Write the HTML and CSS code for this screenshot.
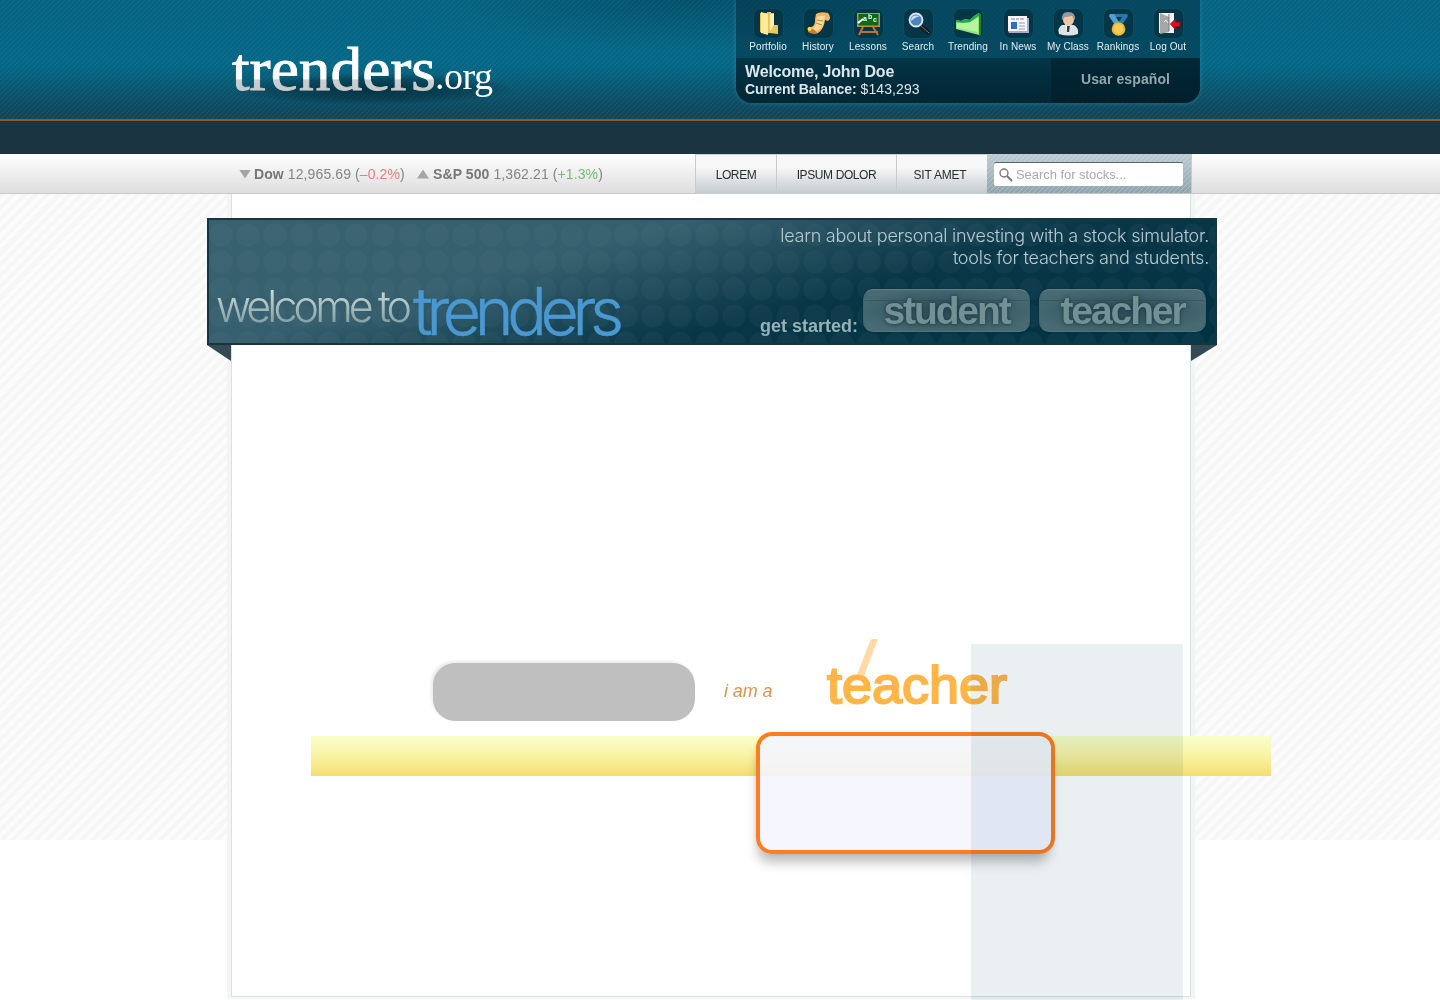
FILE: index.html
```html
<!DOCTYPE html>
<html lang="en">
<head>
<meta charset="utf-8">
<title>trenders.org</title>
<link rel="stylesheet" href="styles.css">
</head>
<body>
<header class="masthead">
  <div class="masthead-inner">
    <svg class="logo" width="290" height="80" viewBox="0 0 290 80" role="img" aria-label="trenders.org">
      <defs>
        <linearGradient id="logoFill" gradientUnits="userSpaceOnUse" x1="0" y1="15" x2="0" y2="60"><stop offset="0" stop-color="#fff"/><stop offset=".72" stop-color="#fff"/><stop offset=".76" stop-color="#ccd0d1"/><stop offset="1" stop-color="#c6c8ca"/></linearGradient>
        <radialGradient id="logoShade"><stop offset="0" stop-color="#02222d" stop-opacity=".7"/><stop offset=".6" stop-color="#02222d" stop-opacity=".4"/><stop offset="1" stop-color="#02222d" stop-opacity="0"/></radialGradient>
      </defs>
      <ellipse cx="148" cy="58" rx="142" ry="16" fill="url(#logoShade)"/>
      <text class="logo-main" x="7" y="59" textLength="204" lengthAdjust="spacingAndGlyphs" fill="url(#logoFill)" stroke="url(#logoFill)">trenders</text>
      <text class="logo-tld" x="210" y="58" textLength="58">.org</text>
    </svg>
    <section class="account">
      <nav class="tools">
        <a class="tool"><span class="tile"><svg viewBox="0 0 29 29"><path d="M6 4h7v-1h4v20l-4 2-7-2z" fill="#e4c365"/><path d="M7 3l7 2v21l-7-2z" fill="#ffe99b"/><path d="M15 4h5v12h4v9l-9-1z" fill="#e9c761"/><path d="M16 5h4v11l-4 6z" fill="#fff0ae"/></svg></span><span>Portfolio</span></a>
        <a class="tool"><span class="tile"><svg viewBox="0 0 29 29"><path d="M12 5q4-3 12-1 4 5 0 8l-3-1q-1 9-7 13-5 2-10-2l1-4q5 1 6-5 0-5 1-8z" fill="#edb765"/><path d="M13 8q3-2 8-1-1 12-8 15l-5-2q5-3 5-12z" fill="#ffd993"/><path d="M4 20q5-2 9 4-5 2-9-1z" fill="#c57b2f"/><path d="M13 11l6 1m-7 2l6 2" stroke="#bb8746"/><circle cx="5.500" cy="20" r="2" fill="#ffe13d"/></svg></span><span>History</span></a>
        <a class="tool"><span class="tile"><svg viewBox="0 0 29 29"><path d="M9 18L5 26m14-8l5 8M6 23h18" stroke="#bc7335" stroke-width="2"/><path d="M3 4h23v14H3z" fill="#c98947"/><path d="M4.500 5h20v11.500h-20z" fill="#086b16"/><path d="M4 14l5-4" stroke="#fff" stroke-width="2"/><text x="9" y="12" class="chalk">a</text><text x="14" y="10" class="chalk">b</text><text x="19" y="13" class="chalk">c</text></svg></span><span>Lessons</span></a>
        <a class="tool"><span class="tile"><svg viewBox="0 0 29 29"><path d="M17 17l8 7" stroke="#151719" stroke-width="4"/><path d="M16 16l9 8" stroke="#8c7770"/><circle cx="12" cy="11" r="6.500" fill="#4f84bd" stroke="#dce7ee" stroke-width="1.800"/><path d="M7 12q0-7 9-5-5 1-9 5z" fill="#c5e4fa"/></svg></span><span>Search</span></a>
        <a class="tool"><span class="tile"><svg viewBox="0 0 29 29"><path d="M2 11l5 1 4-2 5 1 4-4 5-3v22L2 20z" fill="#90e57e"/><path d="M2 11l5 1 4-2 5 1 4-4 5-3v3L16 13l-7 1-7-1z" fill="#20aa50"/><path d="M25 4l2 1v21l-2 1z" fill="#10892b"/><path d="M3 14l12 0 9-5v14L3 19z" fill="#b7f4a0"/></svg></span><span>Trending</span></a>
        <a class="tool"><span class="tile"><svg viewBox="0 0 29 29"><path d="M4 7h19v2h2v15H5l-1-2z" fill="#aaa9cf"/><path d="M4 7h19v15H4z" fill="#f9f9ff"/><path d="M7 10h4m1 0h3m1 0h4" stroke="#7f86a6" stroke-width="1.200"/><path d="M7 13h6v7H7z" fill="#2970d5"/><path d="M15 14h6m-6 3h6m-6 3h6" stroke="#9693b8"/></svg></span><span>In News</span></a>
        <a class="tool"><span class="tile"><svg viewBox="0 0 29 29"><path d="M5 25q-2-6 3-9h12q5 3 4 9-9 3-19 0z" fill="#dfe3e7"/><path d="M11 15h6l-3 10z" fill="#fff"/><path d="M13 17h3l-1 6h-2z" fill="#333e49"/><ellipse cx="14.500" cy="10.500" rx="5.500" ry="6.500" fill="#f1c6a4"/><path d="M8 11Q7 3 14 3q8 0 7 8l-3-4-7 1z" fill="#8f9a9d"/></svg></span><span>My Class</span></a>
        <a class="tool"><span class="tile"><svg viewBox="0 0 29 29"><path d="M6 5h17l1 2-6 9h-7L5 7z" fill="#2579ad"/><path d="M11 8h7l-3.500 5z" fill="#06364b"/><path d="M6 5h4l7 11h-6L5 7z" fill="#5a9fca"/><circle cx="14.500" cy="20" r="6.800" fill="#eab936"/><circle cx="14.500" cy="20" r="4.800" fill="#f8cb59"/></svg></span><span>Rankings</span></a>
        <a class="tool"><span class="tile"><svg viewBox="0 0 29 29"><path d="M5 4h15v20H5z" fill="#f3f2f0"/><path d="M6 4l9 4v15l-9 2z" fill="#a7a7a8"/><path d="M15 5v17" stroke="#777"/><path d="M10 13l2-2 2 3" stroke="#eee" fill="none"/><path d="M16.500 15l5-5v3h4.500v4.500h-4.500v3z" fill="#db111b" stroke="#9d0712"/></svg></span><span>Log Out</span></a>
      </nav>
      <div class="account-foot">
        <div class="welcome"><strong class="hello">Welcome, John Doe</strong><span class="balance"><b>Current Balance:</b> $143,293</span></div>
        <a class="language">Usar español</a>
      </div>
    </section>
  </div>
</header>
<div class="navband"></div>
<div class="ticker">
  <div class="ticker-inner">
    <div class="quotes"><i class="down"></i><span class="dow"><b>Dow</b> 12,965.69 (<em class="loss">–0.2%</em>)</span><i class="up"></i><span class="sp"><b>S&amp;P 500</b> 1,362.21 (<em class="gain">+1.3%</em>)</span></div>
    <nav class="links"><a>LOREM</a><a>IPSUM DOLOR</a><a class="last">SIT AMET</a></nav>
    <div class="searchbox"><div class="field"><svg width="14" height="14" viewBox="0 0 14 14"><circle cx="5" cy="5" r="4" fill="none" stroke="#777" stroke-width="1.400"/><path d="M8 8l5 5" stroke="#777" stroke-width="2"/></svg><span>Search for stocks...</span></div></div>
  </div>
</div>
<main class="page">
  <div class="sheet">
    <section class="banner">
      <svg class="banner-title" width="430" height="90" viewBox="0 0 430 90">
        <defs><linearGradient id="welcomeFill" gradientUnits="userSpaceOnUse" x1="0" y1="22" x2="0" y2="63"><stop stop-color="#d7e5e5"/><stop offset="1" stop-color="#7e9da1"/></linearGradient></defs>
        <text class="light" x="7" y="60" font-size="43" textLength="196" fill="url(#welcomeFill)">welcome to</text>
        <text class="light heavy" x="204" y="73" font-size="66" textLength="211" fill="#4a98cf">trenders</text>
      </svg>
      <div class="pitch">
        <p><span class="pitch-one">learn about personal investing with a stock simulator.</span><br><span class="pitch-two">tools for teachers and students.</span></p>
        <div class="start"><strong>get started:</strong><a class="role"><span>student</span></a><a class="role"><span>teacher</span></a></div>
      </div>
      <i class="fold fold-left"></i><i class="fold fold-right"></i>
    </section>
    <div class="promo">
      <div class="pill"></div>
      <em class="iam">i am a</em>
      <svg class="teacher" width="195" height="85" viewBox="0 0 195 85"><path d="M37 39L50 5q1-2 3-2h5L44 40z" fill="#ffdaa5"/><text x="7" y="67" font-size="52" textLength="180" lengthAdjust="spacingAndGlyphs">teacher</text></svg>
    </div>
    <div class="yellow"></div>
    <div class="callout"></div>
    <aside class="column"></aside>
  </div>
</main>
</body>
</html>
```
FILE: styles.css
```css
* { box-sizing: border-box; }
body { margin: 0; height: 1000px; overflow: hidden; background: #fff; font-family: "Liberation Sans", Arial, sans-serif; }
.masthead { height: 121px; border-bottom: 2px solid #8a5930; background: repeating-linear-gradient(135deg, transparent 0 2.83px, rgba(100,180,195,.12) 2.83px 3.54px), radial-gradient(ellipse 250px 50px at 690px 0, rgba(0,45,65,.35), transparent), linear-gradient(#066482, #056786 55%, #0d4a60 90%, #11465a); }
.masthead-inner { width: 1000px; margin-left: 225px; display: flex; justify-content: space-between; padding-right: 25px; }
.logo { margin-top: 31px; flex: none; }
.logo-main { font: 61px "Liberation Serif", serif; stroke-width: .9; }
.logo-tld { font: 38px "Liberation Serif", serif; fill: #fff; }
.account { width: 464px; height: 103px; overflow: hidden; border-radius: 0 0 16px 16px; background: rgba(5,55,75,.62); box-shadow: 0 0 4px 1px rgba(73,151,172,.35); }
.tools { height: 58px; padding: 9px 7px 0; display: grid; grid-template-columns: repeat(9, 50px); }
.tool { display: flex; flex-direction: column; align-items: center; font-size: 10px; line-height: 12px; color: #e1edf0; white-space: nowrap; gap: 3px; letter-spacing: .1px; }
.tile { width: 29px; height: 29px; border-radius: 7px; background: #033647; box-shadow: 0 0 2px rgba(28,103,122,.6); }
.tile svg { display: block; width: 29px; height: 29px; }
.chalk { font: bold 7px "Liberation Sans", sans-serif; fill: #fff; }
.account-foot { height: 45px; display: flex; background: linear-gradient(rgba(0,35,49,.55), rgba(0,30,42,.75)); }
.welcome { width: 315px; padding: 5px 9px; display: flex; flex-direction: column; color: #dbe7eb; }
.hello { font-size: 16px; line-height: 18px; letter-spacing: -.15px; }
.balance { font-size: 14px; line-height: 17px; letter-spacing: .1px; }
.balance b { letter-spacing: -.08px; }
.language { flex: 1; text-align: center; font-weight: bold; font-size: 14px; line-height: 43px; color: #94a8ae; background: rgba(0,20,30,.38); letter-spacing: .1px; }
.navband { height: 33px; background: #1a3541; }
.ticker { height: 40px; border-bottom: 1px solid #c8c8c8; background: linear-gradient(#fff, #dedede); }
.ticker-inner { width: 961px; margin-left: 231px; height: 39px; display: flex; }
.quotes { width: 464px; display: flex; align-items: center; padding: 1px 0 0 8px; font-size: 14px; letter-spacing: .1px; color: #858585; white-space: nowrap; }
.quotes b { color: #777; }
.dow { width: 151px; margin: 0 12px 0 3px; }
.sp { margin-left: 4px; }
.loss, .gain { font-style: normal; color: #e77d7d; }
.gain { color: #73bd72; }
.down, .up { width: 12px; height: 9px; background: #a5a5a5; clip-path: polygon(0 0, 100% 0, 50% 100%); }
.up { clip-path: polygon(50% 0, 100% 100%, 0 100%); }
.links { display: grid; grid-template-columns: 81px 120px 91px; border-top: 1px solid #ccc; }
.links a { border-left: 1px solid #c8cacb; background: linear-gradient(#f8f8f8 30%, #c1c8cc); color: #292d30; text-align: center; font-size: 12px; line-height: 40px; letter-spacing: -.4px; }
.links .last { padding-right: 4px; letter-spacing: -.2px; }
.searchbox { flex: 1; padding: 8px 8px 0 7px; border-right: 1px solid #c5cccf; background: repeating-linear-gradient(135deg, transparent 0 2.83px, rgba(255,255,255,.22) 2.83px 3.54px), linear-gradient(#bdccd1, #8fa5ad); }
.field { height: 24px; border-top: 1px solid #536672; background: #fff; border-radius: 2px; display: flex; align-items: center; gap: 3px; padding-left: 5px; font-size: 13px; letter-spacing: -.05px; color: #aaa; }
.page { height: 806px; padding-left: 227px; background: repeating-linear-gradient(135deg, #f6f6f6 0 4px, #fcfcfc 4px 8px) 0 0 / 100% 646px no-repeat; }
.sheet { position: relative; width: 968px; height: 803px; border: solid #f3f5f5; border-width: 0 4px 0; background: #fff; box-shadow: inset 1px 0 #d5e3e1, inset -1px -1px #d5e3e1, 0 2px #f7f7f7; display: flow-root; }
.banner { position: relative; width: 1010px; height: 127px; margin: 24px 0 0 -24px; border: 2px solid #183441; background: radial-gradient(circle at 12px 15px, rgba(127,148,158,.07) 11px, transparent 12px) 0 0 / 27px 27px, linear-gradient(165deg, #396270 0, #355f6e 33%, #083647 62%, #003343); display: flex; justify-content: space-between; }
.banner-title { margin-top: 42px; flex: none; overflow: visible; }
.light { font-family: Inter, sans-serif; font-weight: 300; }
.heavy { stroke: #4a98cf; stroke-width: .5px; }
.pitch { width: 460px; padding: 5px 6px 0 0; text-align: right; color: #b9cbd0; }
.pitch p { margin: 0; font: 300 18px/22px Inter, sans-serif; letter-spacing: -.24px; white-space: nowrap; }
.start { display: flex; justify-content: flex-end; gap: 9px; margin: 20px 3px 0 0; }
.start strong { align-self: flex-end; margin: 0 -4px -5px 0; font-size: 18px; line-height: 22px; height: 22px; color: #96b2b5; }
.role { width: 167px; height: 43px; border-radius: 10px; border: 1px solid #3e6570; border-top-color: #608389; border-bottom-color: #52757c; box-shadow: 0 0 2px #062630; background: linear-gradient(transparent 0 10px, rgba(30,60,70,.3) 10px 11px, transparent 11px), radial-gradient(ellipse at center, #2d4b55, #476a73 80%); text-align: center; color: #739095; text-shadow: 0 0 4px #153640; }
.role span { font: bold 39px/41px "Liberation Sans", sans-serif; letter-spacing: -2.1px; }
.fold { position: absolute; top: 125px; width: 24px; height: 16px; background: #344b55; }
.fold-left { left: -2px; clip-path: polygon(0 0, 100% 0, 100% 100%); }
.fold-right { right: -2px; width: 26px; clip-path: polygon(0 0, 100% 0, 0 100%); }
.promo { height: 75px; margin: 291px 0 0 202px; display: flex; align-items: flex-start; }
.pill { width: 262px; height: 58px; margin-top: 27px; border-radius: 22px; background: #bfbfbf; box-shadow: -2px -2px 3px rgba(0,0,0,.08); }
.iam { margin: 44px 48px 0 29px; font-size: 18px; line-height: 22px; letter-spacing: -.1px; color: #dc944b; white-space: nowrap; }
.teacher { flex: none; }
.teacher text { font-family: "Liberation Sans", sans-serif; fill: #ffb548; stroke: #ffb548; stroke-width: 2px; }
.yellow { width: 960px; height: 40px; margin: 25px 0 0 80px; background: linear-gradient(#f8ffc9, #faf3a4 50%, #f4de72); }
.callout { position: absolute; left: 525px; top: 538px; width: 299px; height: 122px; border: 4px solid #ff7c20; border-radius: 16px; background: rgba(244,245,255,.9); background-clip: padding-box; box-shadow: -2px 12px 12px -4px rgba(0,0,0,.27), 0 0 4px rgba(0,0,0,.06); }
.column { position: absolute; left: 740px; top: 450px; width: 212px; height: 356px; background: #eaf0f2; mix-blend-mode: multiply; }
```
